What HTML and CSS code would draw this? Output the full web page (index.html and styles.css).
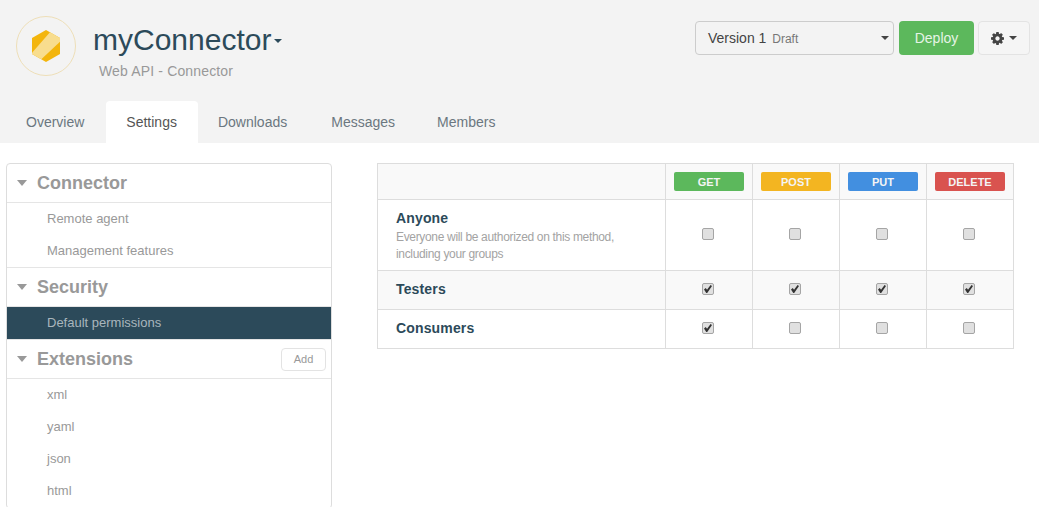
FILE: index.html
```html
<!DOCTYPE html>
<html lang="en">
<head>
    <meta charset="UTF-8">
    <title>myConnector</title>
    <link rel="stylesheet" href="styles.css">
</head>
<body>
    <div class="header">
        <div class="top">
            <div class="logo">
                <svg width="28" height="32" viewBox="0 0 28 32">
                    <polygon points="14,0 28,8 28,24 14,32 0,24 0,8" fill="#f3b50c"/>
                    <polygon points="18,2.3 28,8 28,11.700 9.300,29.300 0,24 0,22.700" fill="#f8dd8e"/>
                </svg>
            </div>
            <div class="title-box">
                <h1>myConnector<span class="caret caret-title"></span></h1>
                <p>Web API - Connector</p>
            </div>
            <div class="actions">
                <div class="version">
                    <span>Version 1 <small>Draft</small></span>
                    <span class="caret caret-dark"></span>
                </div>
                <button class="deploy">Deploy</button>
                <button class="gear">
                    <svg width="13" height="13" viewBox="0 -128 1536 1536">
                        <path fill="#444" d="M1024 640q0-106-75-181t-181-75-181 75-75 181 75 181 181 75 181-75 75-181zm512-109v222q0 12-8 23t-20 13l-185 28q-19 54-39 91 35 50 107 138 10 12 10 25t-9 23q-27 37-99 108t-94 71q-12 0-26-9l-138-108q-44 23-91 38-16 136-29 186-7 28-36 28h-222q-14 0-24.500-8.500t-11.500-21.500l-28-184q-49-16-90-37l-141 107q-10 9-25 9-14 0-25-11-126-114-165-168-7-10-7-23 0-12 8-23 15-21 51-66.500t54-70.500q-27-50-41-99l-183-27q-13-2-21-12.500t-8-23.500v-222q0-12 8-23t19-13l186-28q14-46 39-92-40-57-107-138-10-12-10-24 0-10 9-23 26-36 98.500-107.500t94.500-71.500q13 0 26 10l138 107q44-23 91-38 16-136 29-186 7-28 36-28h222q14 0 24.500 8.500t11.500 21.500l28 184q49 16 90 37l142-107q9-9 24-9 13 0 25 10 129 119 165 170 7 8 7 22 0 12-8 23-15 21-51 66.500t-54 70.500q26 50 41 98l183 28q13 2 21 12.500t8 23.500z"/>
                    </svg>
                    <span class="caret caret-dark"></span>
                </button>
            </div>
        </div>
        <ul class="tabs">
            <li>Overview</li>
            <li class="active">Settings</li>
            <li class="wide">Downloads</li>
            <li>Messages</li>
            <li>Members</li>
        </ul>
    </div>

    <div class="content">
        <div class="sidebar">
            <div class="section">
                <div class="section-title"><span class="caret caret-section"></span>Connector</div>
                <a>Remote agent</a>
                <a>Management features</a>
            </div>
            <div class="section">
                <div class="section-title"><span class="caret caret-section"></span>Security</div>
                <a class="active">Default permissions</a>
            </div>
            <div class="section">
                <div class="section-title"><span class="caret caret-section"></span>Extensions<button class="add">Add</button></div>
                <a>xml</a>
                <a>yaml</a>
                <a>json</a>
                <a>html</a>
            </div>
        </div>

        <table class="permissions">
            <tr class="shaded head">
                <th></th>
                <th><span class="badge get">GET</span></th>
                <th><span class="badge post">POST</span></th>
                <th><span class="badge put">PUT</span></th>
                <th><span class="badge delete">DELETE</span></th>
            </tr>
            <tr class="tall">
                <td class="name"><b>Anyone</b><p>Everyone will be authorized on this method,<br>including your groups</p></td>
                <td><input type="checkbox"></td>
                <td><input type="checkbox"></td>
                <td><input type="checkbox"></td>
                <td><input type="checkbox"></td>
            </tr>
            <tr class="shaded">
                <td class="name"><b>Testers</b></td>
                <td><input type="checkbox" checked></td>
                <td><input type="checkbox" checked></td>
                <td><input type="checkbox" checked></td>
                <td><input type="checkbox" checked></td>
            </tr>
            <tr>
                <td class="name"><b>Consumers</b></td>
                <td><input type="checkbox" checked></td>
                <td><input type="checkbox"></td>
                <td><input type="checkbox"></td>
                <td><input type="checkbox"></td>
            </tr>
        </table>
    </div>
</body>
</html>
```

FILE: styles.css
```css
* {
    box-sizing: border-box;
}

body {
    margin: 0;
    height: 507px;
    overflow: hidden;
    font-family: "Liberation Sans", Arial, sans-serif;
    font-size: 14px;
    color: #444;
}

.header {
    background-color: #f3f3f3;
    height: 143px;
    padding-top: 16px;
}

.top {
    display: flex;
    height: 85px;
    padding: 0 9px 0 16px;
}

.logo {
    width: 60px;
    height: 60px;
    border: 1px solid #eedfb8;
    border-radius: 50%;
    display: flex;
    justify-content: center;
    align-items: center;
}

.title-box {
    margin-left: 17px;
}

.title-box h1 {
    margin: 6px 0 0;
    font-size: 30px;
    font-weight: normal;
    line-height: 36px;
    color: #2c4a5a;
}

.title-box p {
    margin: 3px 0 0 6px;
    font-size: 14px;
    line-height: 20px;
    letter-spacing: 0.15px;
    color: #999;
}

.caret {
    display: inline-block;
    width: 0;
    height: 0;
    border-left: 4px solid transparent;
    border-right: 4px solid transparent;
}

.caret-title {
    border-top: 4px solid #2c4a5a;
    margin-left: 3px;
    vertical-align: 7px;
}

.caret-dark {
    border-top: 4px solid #444;
}

.actions {
    margin-left: auto;
    margin-top: 5px;
    display: flex;
    height: 34px;
}

.version {
    width: 199px;
    border: 1px solid #ccc;
    border-radius: 4px;
    padding: 0 4px 0 12px;
    display: flex;
    justify-content: space-between;
    align-items: center;
    color: #444;
}

.version small {
    font-size: 12px;
    color: #777;
    margin-left: 2px;
}

.deploy {
    width: 75px;
    margin-left: 5px;
    border: none;
    border-radius: 4px;
    background-color: #5cb85c;
    color: #e6f4e6;
    font-family: inherit;
    font-size: 14px;
}

.gear {
    width: 52px;
    margin-left: 4px;
    border: 1px solid #e3e3e3;
    border-radius: 4px;
    background-color: #f5f5f5;
    display: flex;
    justify-content: center;
    align-items: center;
    gap: 5px;
    padding: 0;
}

.tabs {
    list-style: none;
    margin: 0;
    padding: 0 0 0 6px;
    display: flex;
    height: 42px;
}

.tabs li {
    padding: 0 20px;
    margin-right: 2px;
    line-height: 43px;
    color: #6b7780;
    border-radius: 4px 4px 0 0;
}

.tabs li.active {
    background-color: white;
    color: #555;
    margin-right: 0;
    padding-right: 21px;
}

.tabs li.wide {
    margin-right: 4px;
}

.content {
    display: flex;
    align-items: flex-start;
    padding: 20px 25px 0 6px;
}

.sidebar {
    width: 326px;
    border: 1px solid #ddd;
    border-radius: 4px;
    flex-shrink: 0;
}

.section {
    border-bottom: 1px solid #e5e5e5;
}

.section-title {
    height: 39px;
    border-bottom: 1px solid #e5e5e5;
    padding: 0 5px 0 10px;
    display: flex;
    align-items: center;
    font-size: 18px;
    font-weight: bold;
    color: #999;
}

.caret-section {
    border-left-width: 5px;
    border-right-width: 5px;
    border-top: 6px solid #999;
    margin-right: 10px;
}

.section a {
    display: block;
    height: 32px;
    line-height: 32px;
    padding-left: 40px;
    font-size: 13px;
    color: #999;
}

.section a.active {
    background-color: #2c4a5a;
    color: #a9b6bd;
}

.add {
    margin-left: auto;
    width: 45px;
    height: 23px;
    padding: 0;
    border: 1px solid #e3e3e3;
    border-radius: 4px;
    background-color: white;
    color: #999;
    font-family: inherit;
    font-size: 11px;
}

.permissions {
    margin-left: 45px;
    width: 637px;
    border-collapse: collapse;
    table-layout: fixed;
}

.permissions th,
.permissions td {
    border: 1px solid #ddd;
    text-align: center;
    padding: 0;
}

.permissions th:first-child {
    width: 288px;
}

.permissions tr {
    height: 39px;
}

.permissions tr.head {
    height: 36px;
}

.permissions tr.tall {
    height: 71px;
}

.shaded {
    background-color: #f9f9f9;
}

.badge {
    display: block;
    width: 70px;
    height: 19px;
    margin: 0 auto;
    border-radius: 2px;
    line-height: 20px;
    color: #f4f4f4;
    font-size: 11px;
    font-weight: bold;
}

.get {
    background-color: #5cb85c;
}

.post {
    background-color: #f3b521;
}

.put {
    background-color: #428fe0;
}

.delete {
    background-color: #d9534f;
}

.permissions td.name {
    text-align: left;
    padding: 0 0 2px 18px;
    color: #2c4a5a;
}

.permissions .tall td.name {
    padding-bottom: 0;
    padding-top: 3px;
}

.name b {
    letter-spacing: 0.15px;
}

.name p {
    margin: 3px 0 0;
    font-size: 12px;
    line-height: 17px;
    letter-spacing: -0.33px;
    color: #a3a3a3;
}

input[type="checkbox"] {
    appearance: none;
    display: block;
    width: 12px;
    height: 12px;
    margin: 0 0 2px 36px;
    border: 1px solid #a5a5a5;
    border-radius: 2px;
    background-color: #e0e0e0;
    position: relative;
}

input[type="checkbox"]:checked::before {
    content: "";
    position: absolute;
    left: 1px;
    top: 1px;
    width: 8px;
    height: 8px;
    background-color: #333;
    clip-path: polygon(0 55%, 22% 38%, 38% 58%, 82% 0, 100% 14%, 40% 100%, 28% 100%);
}
```
